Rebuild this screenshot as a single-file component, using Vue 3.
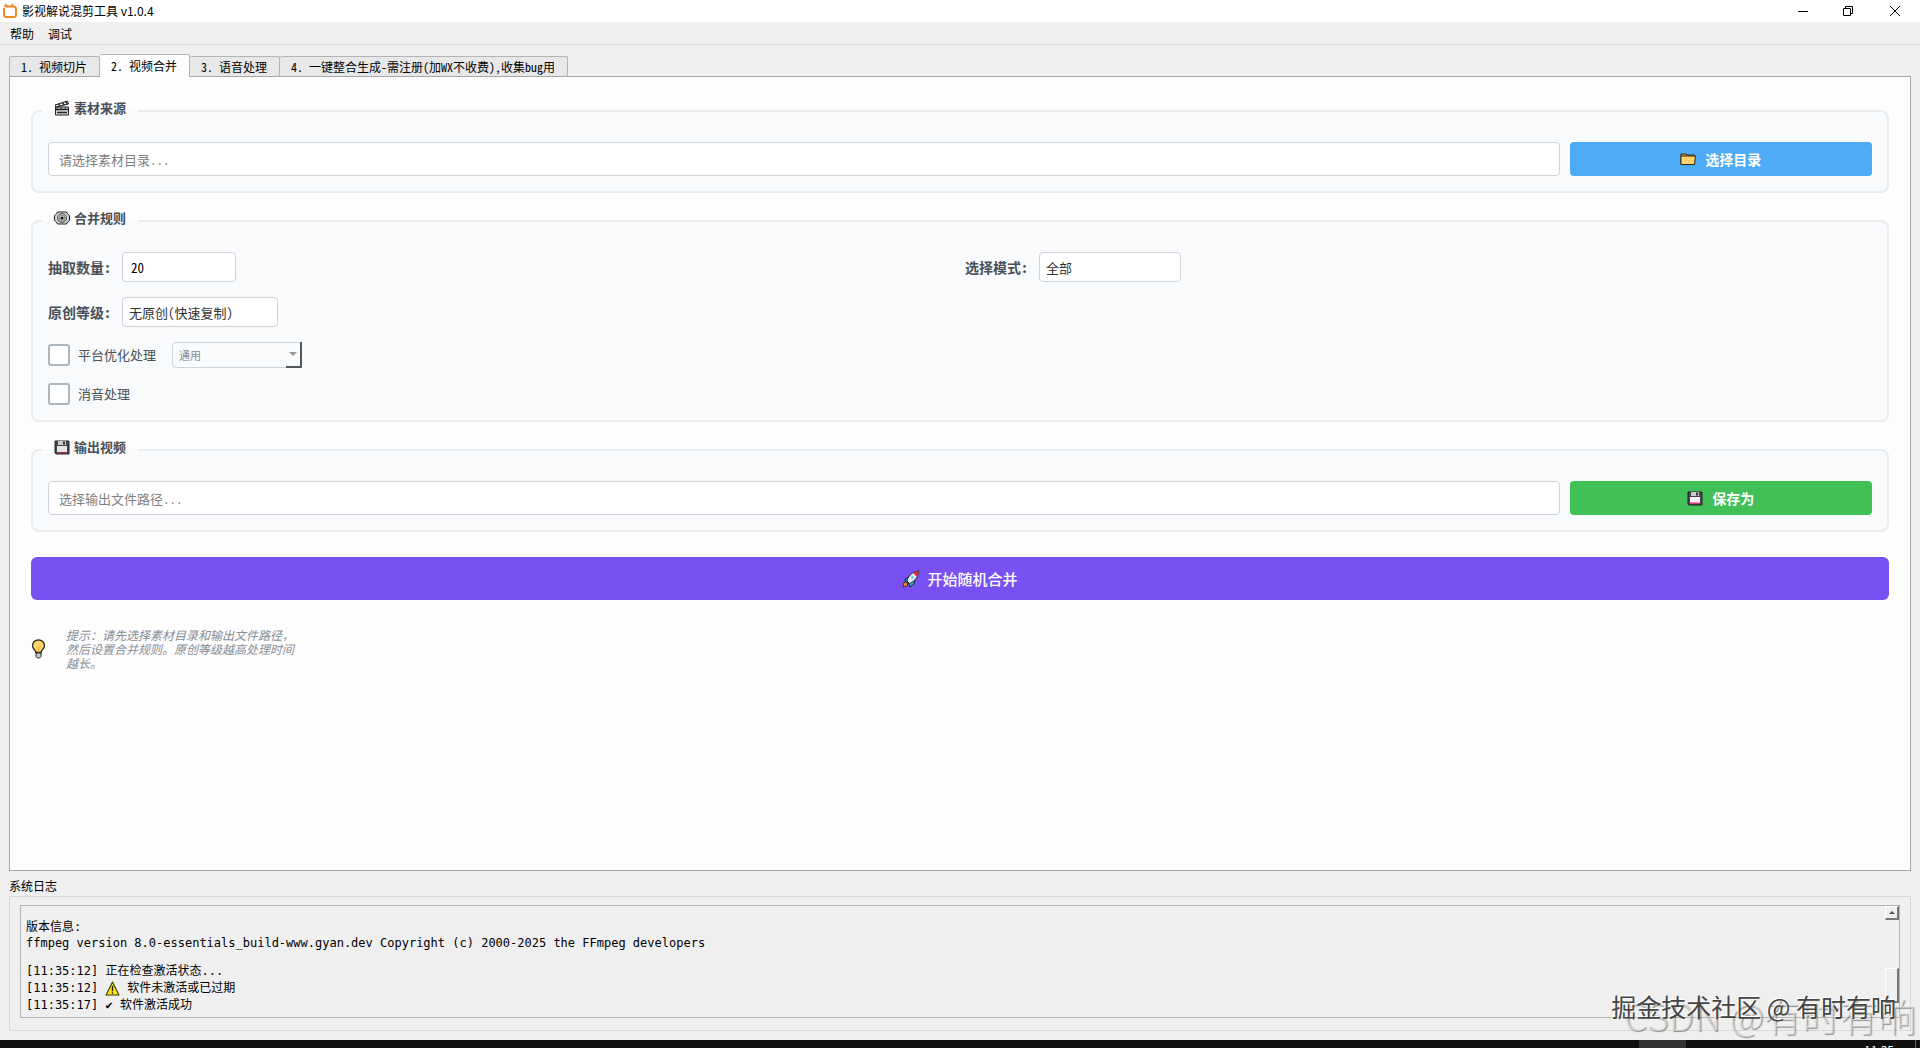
<script setup>
import { ref } from 'vue'

const menus = ['帮助', '调试']
const tabs = ['1. 视频切片', '2. 视频合并', '3. 语音处理', '4. 一键整合生成-需注册(加WX不收费),收集bug用']
const activeTab = ref(1)

const sourceDir = ref('')
const count = ref('20')
const mode = ref('全部')
const level = ref('无原创(快速复制)')
const optimize = ref(false)
const mute = ref(false)
const platform = ref('通用')
const outputPath = ref('')

const modes = ['全部', '随机', '顺序']
const levels = ['无原创(快速复制)', '轻度原创', '深度原创']
</script>

<template>
  <div class="window">
    <header class="title-bar">
      <svg class="app-icon" viewBox="0 0 16 16" fill="none" stroke="#f08a24" stroke-width="2">
        <path d="M4 3.5h7.5a2.5 2.5 0 0 1 2.5 2.5v5.500a2.500 2.500 0 0 1-2.500 2.500h-7a2.500 2.500 0 0 1-2.500-2.500V5" />
        <path d="M3 1l3 3M11 1L9 3.500M2 3.500h3" stroke-width="1.500" />
      </svg>
      <h1>影视解说混剪工具 v1.0.4</h1>
      <div class="win-buttons">
        <button type="button" aria-label="最小化">
          <svg viewBox="0 0 12 12" fill="none" stroke="#000"><path d="M1 6.500h10" /></svg>
        </button>
        <button type="button" aria-label="还原">
          <svg viewBox="0 0 12 12" fill="none" stroke="#000">
            <path d="M1.500 3.500h7v7h-7zM3.500 3.500v-2h7v7h-2" />
          </svg>
        </button>
        <button type="button" aria-label="关闭">
          <svg viewBox="0 0 12 12" fill="none" stroke="#000"><path d="M1 1l10 10M11 1L1 11" /></svg>
        </button>
      </div>
    </header>

    <nav class="menu-bar">
      <button v-for="m in menus" :key="m" type="button">{{ m }}</button>
    </nav>

    <div class="tabs" role="tablist">
      <button v-for="(t, i) in tabs" :key="t" type="button" role="tab" :aria-selected="i === activeTab"
        :class="{ active: i === activeTab }" @click="activeTab = i">{{ t }}</button>
    </div>

    <main class="pane">
      <fieldset>
        <legend>
          <svg class="icon" viewBox="0 0 16 16">
            <path d="M1 5L13.500 1l1 3L2 7z" fill="#f4f4f4" stroke="#222" />
            <path d="M4 4l2.500 2M8 2.800L10.500 5M11.500 1.800l2 2" stroke="#222" stroke-width="1.500" />
            <path d="M1.500 7h13v8h-13z" fill="#d5d8da" stroke="#222" />
            <path d="M2 9.500h12M3 12.500h10" stroke="#222" stroke-width="1.300" />
            <path d="M4 7l-1.500 2.500M8 7L6.500 9.500M12 7l-1.500 2.500" stroke="#222" />
          </svg>
          素材来源
        </legend>
        <div class="path-row">
          <input v-model="sourceDir" type="text" aria-label="素材目录" placeholder="请选择素材目录...">
          <button type="button" class="btn blue">
            <svg class="icon" viewBox="0 0 16 16" stroke="#33270f" stroke-linejoin="round">
              <path d="M1 13V3h5l1 1h7v2" fill="#e6a52c" />
              <path d="M1 13.500V5h14.500l-1 8.500z" fill="#ffd36b" />
            </svg>
            选择目录
          </button>
        </div>
      </fieldset>

      <fieldset>
        <legend>
          <svg class="icon" viewBox="0 0 16 16">
            <path d="M3.500 2h9l1 2 2 1.500v5l-2 1.500-1 2h-9l-1-2-2-1.500v-5l2-1.500z" fill="#d4d6d8" stroke="#222" />
            <circle cx="8" cy="8" r="4.500" fill="#bbb" stroke="#555" />
            <circle cx="8" cy="8" r="2.800" fill="#ddd" stroke="#888" />
            <circle cx="8" cy="8" r="1.600" fill="#111" />
          </svg>
          合并规则
        </legend>
        <div class="rules">
          <div class="two-cols">
            <div class="field">
              <label for="count">抽取数量:</label>
              <input id="count" v-model="count" type="text" class="count">
            </div>
            <div class="field">
              <label for="mode">选择模式:</label>
              <select id="mode" v-model="mode" class="mode">
                <option v-for="m in modes" :key="m">{{ m }}</option>
              </select>
            </div>
          </div>
          <div class="field">
            <label for="level">原创等级:</label>
            <select id="level" v-model="level" class="level">
              <option v-for="l in levels" :key="l">{{ l }}</option>
            </select>
          </div>
          <div class="check-row">
            <label class="check"><input v-model="optimize" type="checkbox">平台优化处理</label>
            <div class="combo">
              <select v-model="platform" aria-label="平台" :disabled="!optimize">
                <option>通用</option>
              </select>
              <span class="combo-arrow"></span>
            </div>
          </div>
          <label class="check"><input v-model="mute" type="checkbox">消音处理</label>
        </div>
      </fieldset>

      <fieldset>
        <legend>
          <svg class="icon" viewBox="0 0 16 16">
            <path d="M1 2h14v13H2l-1-1z" fill="#45474b" stroke="#222" />
            <path d="M4 2h8v4H4z" fill="#c8cacc" />
            <path d="M9 2.500h2v3H9z" fill="#333" />
            <path d="M3 7h10v7H3z" fill="#e4e4e4" />
            <path d="M3 13h10v1.500H3z" fill="#a0304a" />
          </svg>
          输出视频
        </legend>
        <div class="path-row">
          <input v-model="outputPath" type="text" aria-label="输出文件" placeholder="选择输出文件路径...">
          <button type="button" class="btn green">
            <svg class="icon" viewBox="0 0 16 16">
              <path d="M1 2h14v13H2l-1-1z" fill="#4b4450" stroke="#222" />
              <path d="M4 2h8v4H4z" fill="#c8cacc" />
              <path d="M9 2.500h2v3H9z" fill="#333" />
              <path d="M3 7h10v7H3z" fill="#f6eef6" />
              <path d="M3 12.500h10V14H3z" fill="#e0357c" />
            </svg>
            保存为
          </button>
        </div>
      </fieldset>

      <button type="button" class="start">
        <svg viewBox="0 0 18 18">
          <path d="M3 9l5-3 5 4-1 4-4 3-1-3-3-2z" fill="#3aa5d8" stroke="#1b2634" />
          <path d="M2 12l4 1-1 3-4 1z" fill="#f28a2c" stroke="#3a2410" stroke-width=".8" />
          <path d="M5 11c1-5 5-9 11.500-10C16.500 7 13 11 7.500 13.500z" fill="#e8eff4" stroke="#1b2634" />
          <path d="M11 3c2-1.300 3.500-1.800 5.500-2 0 2-.5 4-1.600 5.700z" fill="#e02a3c" />
          <circle cx="10.500" cy="7.500" r="1.300" fill="#57b9e6" />
        </svg>
        开始随机合并
      </button>

      <div class="tip">
        <svg viewBox="0 0 14 20">
          <path d="M4.500 13.500C4.500 11 1 10 1 6.800a6 6 0 0 1 12 0c0 3.200-3.500 4.200-3.500 6.700z" fill="#ffd56a" stroke="#222" stroke-width="1.300" />
          <path d="M4.500 14h5v3.500L8 19H6l-1.500-1.500z" fill="#c9cdd0" stroke="#222" />
          <path d="M5.500 7.500L7 9l1.500-1.500M7 9v4.500" fill="none" stroke="#f4ab35" />
        </svg>
        <p>提示：请先选择素材目录和输出文件路径，然后设置合并规则。原创等级越高处理时间越长。</p>
      </div>
    </main>

    <section class="log">
      <h2>系统日志</h2>
      <div class="log-frame">
        <div class="log-view">
          <div class="log-text" role="log">
            <p>版本信息:</p>
            <p>ffmpeg version 8.0-essentials_build-www.gyan.dev Copyright (c) 2000-2025 the FFmpeg developers</p>
            <p class="gap">[11:35:12] 正在检查激活状态...</p>
            <p class="warn">[11:35:12]
              <svg viewBox="0 0 14 14">
                <path d="M7 1l6 12H1z" fill="#ffe11a" stroke="#3c3600" stroke-linejoin="round" />
                <path d="M7 4.500v5M7 10.500V12" stroke="#222" stroke-width="1.300" />
              </svg>
              软件未激活或已过期
            </p>
            <p>[11:35:17] ✔ 软件激活成功</p>
          </div>
          <div class="scrollbar">
            <button type="button" aria-label="向上滚动"></button>
            <div class="thumb"></div>
          </div>
        </div>
      </div>
    </section>

    <footer class="taskbar">
      <span class="task"></span>
      <span class="clock">11:35</span>
      <span class="desktop"></span>
    </footer>

    <div class="mark csdn">CSDN @有时有响</div>
    <div class="mark juejin">掘金技术社区 @ 有时有响</div>
  </div>
</template>

<style>
body {
  margin: 0;
  overflow: hidden;
}
</style>

<style scoped>
* {
  box-sizing: border-box;
}

.window {
  position: relative;
  display: flex;
  flex-direction: column;
  height: 100vh;
  overflow: hidden;
  background: #efefef;
  color: #000;
  font: 12px/16px "Noto Sans CJK SC", sans-serif;
}

h1,
h2,
p {
  margin: 0;
  font-size: 12px;
  font-weight: 400;
}

button,
input,
select {
  font-family: inherit;
}

button {
  padding: 0;
  border: none;
  background: none;
  color: inherit;
}

.title-bar {
  display: flex;
  align-items: center;
  height: 22px;
  padding-left: 2px;
  background: #fff;
}

.app-icon {
  width: 16px;
  height: 16px;
  margin-right: 4px;
}

.win-buttons {
  display: flex;
  height: 20px;
  margin-left: auto;
}

.win-buttons button {
  width: 45px;
}

.win-buttons button:last-child {
  width: 50px;
}

.win-buttons svg {
  display: block;
  width: 12px;
  height: 12px;
  margin: 0 auto;
}

.menu-bar {
  display: flex;
  gap: 14px;
  height: 23px;
  padding: 0 10px;
  border-bottom: 1px solid #d8d8d8;
}

.menu-bar button {
  font-size: 12px;
}

.tabs {
  display: flex;
  align-items: flex-end;
  height: 31px;
  padding-left: 9px;
}

.tabs button {
  height: 20px;
  padding: 0 12px 0 11px;
  border: 1px solid #b4b4b4;
  border-left-width: 0;
  border-bottom: none;
  border-radius: 2px 2px 0 0;
  background: #e8e8e8;
  font: 12px/18px "Noto Sans Mono CJK SC", "Noto Sans CJK SC", monospace;
}

.tabs button:first-child {
  border-left-width: 1px;
}

.tabs button.active {
  z-index: 1;
  height: 23px;
  margin-bottom: -1px;
  background: #fdfdfd;
}

.pane {
  flex: 1;
  margin: 0 9px;
  padding: 23px 21px 0;
  border: 1px solid #a5a8a6;
  background: #fdfdfd;
}

fieldset {
  min-width: 0;
  margin: 0 0 17px;
  padding: 20px 15px 15px;
  border: 2px solid #e9ecef;
  border-radius: 8px;
  background: #f8fafc;
}

legend {
  display: flex;
  align-items: center;
  gap: 4px;
  height: 22px;
  margin-left: -6px;
  padding: 0 12px 6px;
  color: #495057;
  font-size: 13px;
  font-weight: 700;
}

.icon {
  width: 16px;
  height: 16px;
}

input[type="text"],
select,
.field label {
  font-family: "Noto Sans Mono CJK SC", "Noto Sans CJK SC", monospace;
}

input[type="text"],
.field select {
  height: 30px;
  padding: 0 6px;
  border: 1px solid #ced4da;
  border-radius: 4px;
  outline: none;
  background: #fff;
  color: #333;
  font-size: 13px;
}

select {
  appearance: none;
}

.path-row {
  display: grid;
  grid-template-columns: 5fr 1fr;
  gap: 10px;
}

.path-row input {
  min-width: 0;
  height: 34px;
  padding: 0 10px;
}

.path-row input::placeholder {
  color: #808080;
}

.btn {
  display: flex;
  align-items: center;
  justify-content: center;
  gap: 9px;
  height: 34px;
  border-radius: 4px;
  color: #fff;
  font-size: 14px;
  font-weight: 700;
}

.blue {
  background: #4dabf7;
}

.green {
  background: #40c057;
}

.rules {
  display: flex;
  flex-direction: column;
  gap: 15px;
}

.two-cols {
  display: grid;
  grid-template-columns: 1fr 1fr;
  gap: 10px;
}

.field {
  display: flex;
  align-items: center;
  gap: 10px;
}

.field label {
  width: 64px;
  color: #495057;
  font-size: 14px;
  font-weight: 700;
}

.field .count {
  width: 114px;
  padding: 0 8px;
  color: #000;
}

.field .mode {
  width: 142px;
}

.field .level {
  width: 156px;
}

.check-row {
  display: flex;
  align-items: center;
  gap: 16px;
}

.check {
  display: flex;
  align-items: center;
  align-self: flex-start;
  gap: 8px;
  height: 22px;
  color: #495057;
  font-size: 13px;
}

.check-row .check {
  align-self: center;
}

.check input {
  width: 22px;
  height: 22px;
  margin: 0;
  border: 2px solid #adb5bd;
  border-radius: 3px;
  appearance: none;
  background: #fff;
}

.check input:checked {
  background: #4dabf7;
}

.combo {
  position: relative;
  width: 130px;
  height: 26px;
}

.combo select {
  width: 100%;
  height: 100%;
  padding: 0 6px;
  border: 1px solid #ced4da;
  border-radius: 4px;
  background: #f8fafc;
  color: #868e96;
  font-size: 11px;
  opacity: 1;
}

.combo-arrow {
  position: absolute;
  top: 0;
  right: 0;
  bottom: 0;
  display: grid;
  place-items: center;
  width: 16px;
  border: solid #55585a;
  border-width: 0 2px 2px 0;
  pointer-events: none;
}

.combo-arrow::after {
  content: "";
  border: 4px solid transparent;
  border-top-color: #9a9a9a;
  border-bottom-width: 0;
}

.start {
  display: flex;
  align-items: center;
  justify-content: center;
  gap: 7px;
  width: 100%;
  height: 43px;
  margin-top: 25px;
  border-radius: 6px;
  background: #7950f2;
  color: #fff;
  font-size: 15px;
  font-weight: 500;
}

.start svg {
  width: 18px;
  height: 18px;
}

.tip {
  display: flex;
  align-items: center;
  gap: 20px;
  margin-top: 28px;
}

.tip svg {
  width: 15px;
  height: 20px;
}

.tip p {
  width: 232px;
  color: #868e96;
  font-style: italic;
  line-height: 14px;
}

.log {
  padding: 5px 9px 9px;
}

.log h2 {
  line-height: 20px;
}

.log-frame {
  padding: 8px 10px 12px;
  border: 1px solid #d8d8d8;
}

.log-view {
  display: flex;
  border: 1px solid #b4b4b4;
}

.log-text {
  flex: 1;
  padding: 13px 5px 4px;
  font-family: "DejaVu Sans Mono", "Noto Sans CJK SC", monospace;
}

.log-text p {
  height: 16px;
  line-height: 16px;
}

.log-text .gap {
  margin-top: 12px;
}

.log-text .warn {
  display: flex;
  align-items: center;
  gap: 7px;
  height: 18px;
}

.warn svg {
  width: 15px;
  height: 15px;
}

.scrollbar {
  display: flex;
  flex-direction: column;
  justify-content: space-between;
  width: 14px;
  padding-bottom: 14px;
}

.scrollbar button,
.thumb {
  border: solid;
  border-width: 1px 2px 2px 1px;
  border-color: #fff #777 #777 #fff;
}

.scrollbar button {
  display: grid;
  place-items: center;
  height: 14px;
}

.scrollbar button::after {
  content: "";
  border: 3px solid transparent;
  border-top-width: 0;
  border-bottom-color: #555;
}

.thumb {
  height: 35px;
}

.taskbar {
  display: flex;
  justify-content: flex-end;
  height: 8px;
  overflow: hidden;
  background: #101010;
  color: #fff;
}

.task {
  width: 47px;
  margin-right: 178px;
  background: #333;
}

.clock {
  margin-right: 21px;
  padding-top: 2px;
}

.desktop {
  width: 1px;
  margin-right: 4px;
  background: #666;
}

.mark {
  position: absolute;
  white-space: nowrap;
  pointer-events: none;
}

.csdn {
  right: 4px;
  bottom: 11px;
  color: rgba(239, 239, 239, 0.6);
  font-size: 38px;
  line-height: 44px;
  font-weight: 300;
  text-shadow: 1px 1px 1px rgba(0, 0, 0, 0.4);
}

.juejin {
  right: 24px;
  bottom: 26px;
  color: #444;
  font-size: 25px;
  line-height: 32px;
  text-shadow: -1px -1px 0 #fff;
}
</style>
